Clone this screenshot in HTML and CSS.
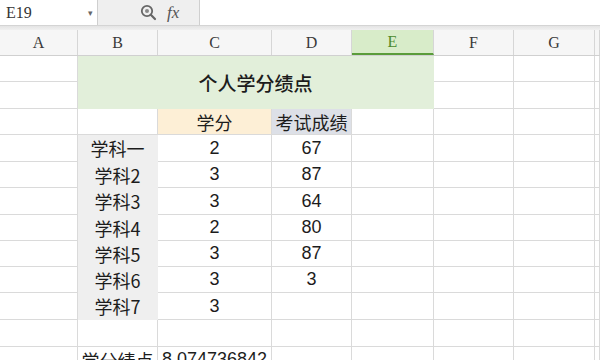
FILE: index.html
```html
<!DOCTYPE html>
<html>
    <head>
        <meta charset="utf-8">
        <link rel="stylesheet" href="styles.css">
    </head>
    <body>
        <div class="toolbar">
            <div class="namebox"><span>E19</span><span class="arrow">&#9662;</span></div>
            <div class="tools">
                <svg width="17" height="17" viewBox="0 0 17 17">
                    <circle cx="7" cy="7" r="5.2" fill="none" stroke="#666" stroke-width="1.8"/>
                    <circle cx="7" cy="7" r="2" fill="#888"/>
                    <line x1="10.8" y1="10.8" x2="15" y2="15" stroke="#666" stroke-width="2.2" stroke-linecap="round"/>
                </svg>
                <span class="fx">fx</span>
            </div>
            <div class="formula"></div>
        </div>
        <div class="band"></div>
        <div class="colheads">
            <div class="ch">A</div>
            <div class="ch">B</div>
            <div class="ch">C</div>
            <div class="ch">D</div>
            <div class="ch active">E</div>
            <div class="ch">F</div>
            <div class="ch">G</div>
            <div class="ch"></div>
        </div>
        <div class="sheet">
            <!-- row 1-2 -->
            <div class="c"></div>
            <div class="c title">个人学分绩点</div>
            <div class="c"></div><div class="c"></div><div class="c"></div>
            <div class="c"></div>
            <div class="c"></div><div class="c"></div><div class="c"></div>
            <!-- row 3 -->
            <div class="c"></div><div class="c"></div>
            <div class="c orange">学分</div>
            <div class="c blue">考试成绩</div>
            <div class="c"></div><div class="c"></div><div class="c"></div><div class="c"></div>
            <!-- row 4-10 -->
            <div class="c"></div><div class="c subj">学科一</div><div class="c num">2</div><div class="c num">67</div>
            <div class="c"></div><div class="c"></div><div class="c"></div><div class="c"></div>
            <div class="c"></div><div class="c subj">学科2</div><div class="c num">3</div><div class="c num">87</div>
            <div class="c"></div><div class="c"></div><div class="c"></div><div class="c"></div>
            <div class="c"></div><div class="c subj">学科3</div><div class="c num">3</div><div class="c num">64</div>
            <div class="c"></div><div class="c"></div><div class="c"></div><div class="c"></div>
            <div class="c"></div><div class="c subj">学科4</div><div class="c num">2</div><div class="c num">80</div>
            <div class="c"></div><div class="c"></div><div class="c"></div><div class="c"></div>
            <div class="c"></div><div class="c subj">学科5</div><div class="c num">3</div><div class="c num">87</div>
            <div class="c"></div><div class="c"></div><div class="c"></div><div class="c"></div>
            <div class="c"></div><div class="c subj">学科6</div><div class="c num">3</div><div class="c num">3</div>
            <div class="c"></div><div class="c"></div><div class="c"></div><div class="c"></div>
            <div class="c"></div><div class="c subj">学科7</div><div class="c num">3</div><div class="c"></div>
            <div class="c"></div><div class="c"></div><div class="c"></div><div class="c"></div>
            <!-- row 11 -->
            <div class="c"></div><div class="c"></div><div class="c"></div><div class="c"></div>
            <div class="c"></div><div class="c"></div><div class="c"></div><div class="c"></div>
            <!-- row 12 -->
            <div class="c"></div><div class="c">学分绩点</div><div class="c num">8.074736842</div><div class="c"></div>
            <div class="c"></div><div class="c"></div><div class="c"></div><div class="c"></div>
        </div>
    </body>
</html>
```

FILE: styles.css
```css
*{
    box-sizing: border-box;
    margin: 0px;
    padding: 0px;
}
body{
    width: 600px;
    height: 360px;
    overflow: hidden;
    background: #fff;
    font-family: "Noto Sans CJK SC", sans-serif;
    color: #1c1c1c;
}
.toolbar{
    display: flex;
    height: 26px;
    border-bottom: 1px solid #d4d4d4;
}
.namebox{
    width: 98px;
    display: flex;
    align-items: center;
    justify-content: space-between;
    padding: 0 4px 0 6px;
    border-right: 1px solid #cfcfcf;
    font-family: "Liberation Serif", serif;
    font-size: 16px;
    color: #333;
}
.arrow{
    font-size: 9px;
    color: #666;
}
.tools{
    width: 102px;
    background: #efefef;
    display: flex;
    align-items: center;
    padding-left: 42px;
    gap: 10px;
    border-right: 1px solid #cfcfcf;
}
.fx{
    font-family: "Liberation Serif", serif;
    font-style: italic;
    font-size: 17px;
    color: #555;
}
.formula{
    flex: 1;
}
.band{
    height: 4px;
    background: linear-gradient(#e4e4e4, #f0f0f0);
}
.colheads{
    display: grid;
    grid-template-columns: 78px 80px 114px 80px 82px 80px 81px 1fr;
    height: 26px;
    background: #f6f6f6;
    border-bottom: 1px solid #d0d0d0;
}
.ch{
    border-right: 1px solid #d6d6d6;
    display: flex;
    align-items: center;
    justify-content: center;
    font-family: "Liberation Serif", serif;
    font-size: 16px;
    color: #3a3a3a;
}
.ch.active{
    background: #d8ecc9;
    color: #4b8a2c;
    border-bottom: 2px solid #5a9c3a;
}
.sheet{
    display: grid;
    grid-template-columns: 78px 80px 114px 80px 82px 80px 81px 1fr;
    grid-template-rows: 26px 27px 26px 27px 26px 27px 26px 26px 26px 27px 27px 26px;
}
.c{
    border-right: 1px solid #dadada;
    border-bottom: 1px solid #dadada;
    display: flex;
    align-items: center;
    justify-content: center;
    font-size: 18px;
    white-space: nowrap;
}
.title{
    grid-column: 2 / 6;
    grid-row: span 2;
    background: #e2efda;
    border-color: #e2efda;
    font-size: 19px;
    font-weight: 500;
}
.orange{
    background: #fdefd6;
}
.blue{
    background: #dde0e7;
}
.subj{
    background: #efefef;
    border-color: #efefef;
}
.num{
    font-family: "Liberation Sans", sans-serif;
    font-size: 18px;
}
```
